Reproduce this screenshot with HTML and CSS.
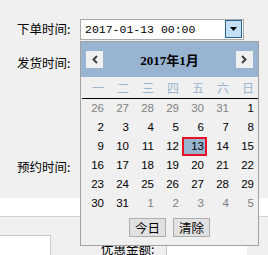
FILE: index.html
```html
<!DOCTYPE html>
<html lang="zh-CN">
  <head>
    <meta charset="UTF-8" />
    <title>下单时间</title>
    <link rel="stylesheet" href="styles.css">
  </head>
  <body>
    <div class="form">
      <div class="row first">
        <span class="label">下单时间:</span>
        <div class="datebox">
          <span class="val">2017-01-13 00:00</span>
          <span class="drop">
            <svg width="7" height="4" viewBox="0 0 7 4"><path d="M0 0H7L3.5 4Z" fill="#000" /></svg>
          </span>
        </div>
      </div>
      <div class="row second"><span class="label">发货时间:</span></div>
      <div class="row third"><span class="label">预约时间:</span></div>
      <div class="strip"></div>
      <div class="panel">
        <div class="box-left"></div>
        <span class="label money">优惠金额:</span>
        <div class="box-money"></div>
      </div>
    </div>

    <div class="cal">
      <div class="cal-head">
        <span class="nav">
          <svg width="8" height="9" viewBox="0 0 8 9"><path d="M6 1L2.5 4.5L6 8" stroke="#404040" stroke-width="2" fill="none" /></svg>
        </span>
        <span class="title">2017年1月</span>
        <span class="nav">
          <svg width="8" height="9" viewBox="0 0 8 9"><path d="M2 1L5.5 4.5L2 8" stroke="#404040" stroke-width="2" fill="none" /></svg>
        </span>
      </div>
      <div class="week">
        <span>一</span><span>二</span><span>三</span><span>四</span><span>五</span><span>六</span><span>日</span>
      </div>
      <div class="days">
        <span class="other">26</span><span class="other">27</span><span class="other">28</span><span class="other">29</span><span class="other">30</span><span class="other">31</span><span>1</span>
        <span>2</span><span>3</span><span>4</span><span>5</span><span>6</span><span>7</span><span>8</span>
        <span>9</span><span>10</span><span>11</span><span>12</span><span class="sel">13</span><span>14</span><span>15</span>
        <span>16</span><span>17</span><span>18</span><span>19</span><span>20</span><span>21</span><span>22</span>
        <span>23</span><span>24</span><span>25</span><span>26</span><span>27</span><span>28</span><span>29</span>
        <span>30</span><span>31</span><span class="other">1</span><span class="other">2</span><span class="other">3</span><span class="other">4</span><span class="other">5</span>
      </div>
      <div class="cal-foot">
        <button class="btn">今日</button>
        <button class="btn">清除</button>
      </div>
    </div>
  </body>
</html>
```

FILE: styles.css
```css
body {
  margin: 0;
  background: #f0f0f0;
  font-family: "Liberation Sans", "Noto Sans CJK SC", sans-serif;
  font-size: 12px;
  color: #000;
}
.form {
  padding-top: 18px;
}
.row {
  display: flex;
  align-items: center;
  height: 21px;
}
.row.second {
  margin-top: 13px;
}
.row.third {
  margin-top: 83px;
}
.label {
  padding-left: 17px;
  width: 80px;
  flex: none;
  box-sizing: border-box;
  font-family: "Noto Sans CJK SC", sans-serif;
  font-size: 12.5px;
  white-space: nowrap;
}
.datebox {
  display: flex;
  align-items: center;
  width: 164px;
  height: 21px;
  box-sizing: border-box;
  background: #fff;
  border: 1px solid #a9a9a9;
  margin-top: 1px;
}
.val {
  flex: 1;
  padding-left: 4px;
  font-family: "Liberation Mono", monospace;
  font-size: 11.5px;
}
.drop {
  display: flex;
  align-items: center;
  justify-content: center;
  width: 17px;
  height: 18px;
  box-sizing: border-box;
  margin-right: 1px;
  background: #c4e0f7;
  border: 1px solid #2c628b;
}
.strip {
  margin-top: 21px;
  height: 18px;
  background: #fff;
  border-bottom: 1px solid #d2d2d2;
}
.panel {
  display: flex;
  align-items: flex-start;
  height: 38px;
}
.box-left {
  margin-top: 18px;
  width: 50px;
  height: 20px;
  background: #fff;
  border-top: 1px solid #c8c8c8;
  border-right: 1px solid #c8c8c8;
}
.label.money {
  margin-top: 22px;
  padding-left: 50px;
  width: auto;
  line-height: 20px;
}
.box-money {
  margin-left: 12px;
  margin-top: 28px;
  width: 80px;
  height: 12px;
  background: #fff;
  border-left: 1px solid #c8c8c8;
}

/* date picker popup */
.cal {
  position: absolute;
  left: 80px;
  top: 41px;
  width: 179px;
  height: 205px;
  box-sizing: border-box;
  background: #f0f0f0;
  border: 1px solid #a0a0a0;
}
.cal-head {
  display: flex;
  align-items: center;
  justify-content: space-between;
  height: 35px;
  padding: 0 5px;
  background: #99b4d1;
}
.nav {
  display: flex;
  align-items: center;
  justify-content: center;
  width: 17px;
  height: 17px;
  background: #f0f0f0;
}
.title {
  font-weight: bold;
  font-size: 13px;
  font-family: "Liberation Serif", "Noto Sans CJK SC", serif;
}
.week,
.days {
  display: grid;
  grid-template-columns: repeat(7, 25px);
  margin-left: 1px;
}
.week {
  height: 21px;
  border-bottom: 1px solid #000;
  font-family: "Noto Sans CJK SC", sans-serif;
  color: #99b4d1;
  line-height: 21px;
}
.week span,
.days span {
  text-align: right;
  padding-right: 3px;
}
.days span {
  height: 19px;
  line-height: 19px;
  box-sizing: border-box;
  font-size: 11.5px;
}
.days .other {
  color: #808080;
}
.days .sel {
  background: #99b4d1;
  border: 2px solid #e81123;
  line-height: 15px;
  padding-right: 1px;
}
.cal-foot {
  display: flex;
  justify-content: center;
  gap: 7px;
  padding-top: 5px;
}
.btn {
  width: 37px;
  height: 19px;
  padding: 0;
  background: #e1e1e1;
  border: 1px solid #adadad;
  font-family: "Noto Sans CJK SC", sans-serif;
  font-size: 12.5px;
  line-height: 17px;
}
```
